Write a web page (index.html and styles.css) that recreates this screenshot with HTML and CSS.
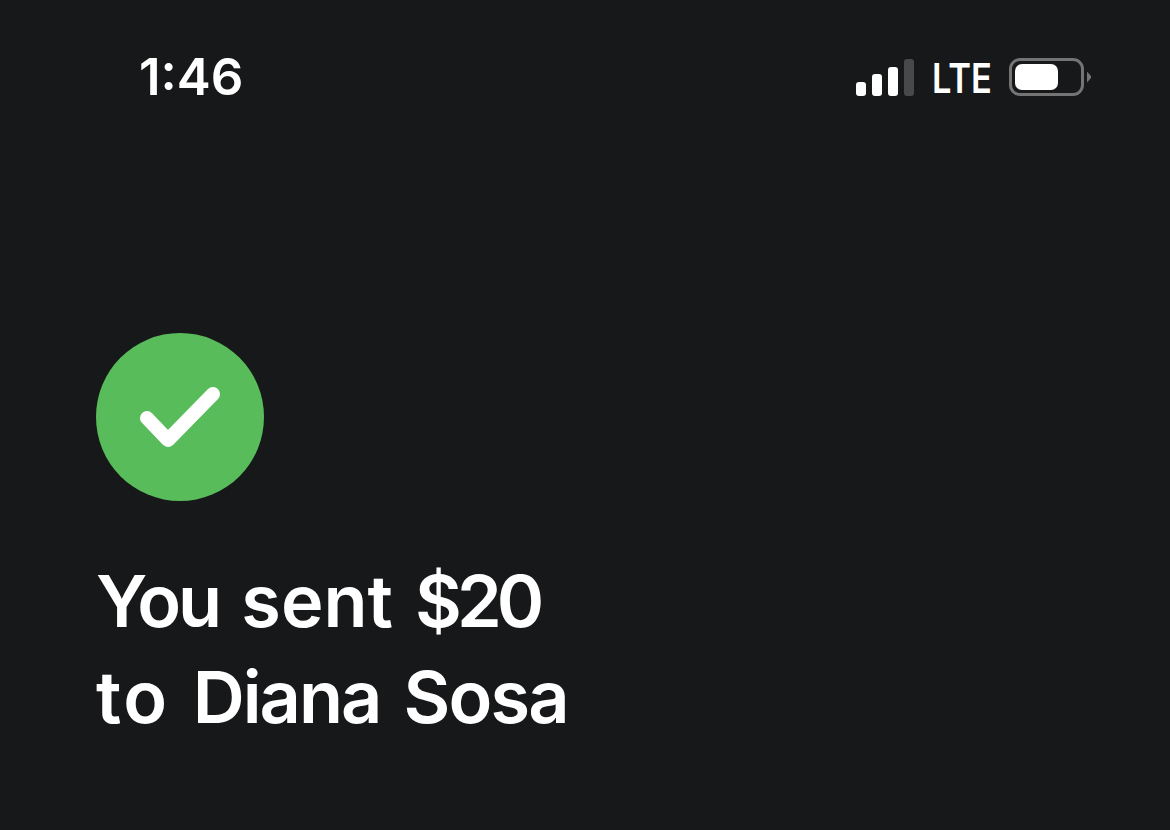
FILE: index.html
```html
<!DOCTYPE html>
<html lang="en">
<head>
<meta charset="utf-8">
<title>Payment sent</title>
<link rel="stylesheet" href="styles.css">
</head>
<body>
<main class="screen">
  <header class="status">
    <span class="time">1:46</span>
    <div class="indicators">
      <div class="signal"><i class="bar b1"></i><i class="bar b2"></i><i class="bar b3"></i><i class="bar b4"></i></div>
      <span class="lte">LTE</span>
      <div class="battery"><div class="cell"><div class="charge"></div></div><div class="nub"></div></div>
    </div>
  </header>
  <section class="content">
    <div class="badge">
      <svg class="check" width="80" height="60" viewBox="0 0 80 60"><path d="M7 31 L28 53 L73 7" fill="none" stroke="#fff" stroke-width="14" stroke-linecap="round" stroke-linejoin="round"/></svg>
    </div>
    <h1 class="title"><span class="line line-first"><span class="w-you">You</span> <span>sent</span> <span class="w-sum">$20</span></span><span class="line"><span class="w-to">to</span> <span class="w-diana">Diana</span> <span class="w-sosa">Sosa</span></span></h1>
  </section>
</main>
</body>
</html>
```
FILE: styles.css
```css
html, body { margin: 0; padding: 0; background: #17181a; }
.screen { width: 1170px; height: 830px; overflow: hidden; background: #17181a; color: #fff; font-family: "Inter", "Liberation Sans", sans-serif; box-sizing: border-box; }
.status { display: flex; justify-content: space-between; align-items: center; height: 44px; padding: 55px 79px 0 139px; }
.time { font-size: 51px; font-weight: 600; line-height: 44px; }
.indicators { display: flex; align-items: center; gap: 18px; }
.signal { display: flex; align-items: flex-end; gap: 6px; height: 37px; }
.bar { display: block; width: 10px; border-radius: 3px; background: #fff; }
.b1 { height: 14px; } .b2 { height: 22px; } .b3 { height: 29px; } .b4 { height: 37px; background: #48494b; }
.lte { display: block; width: 59px; margin-top: 2px; font-size: 41px; font-weight: 600; line-height: 44px; white-space: nowrap; transform: scaleX(.84); transform-origin: left center; }
.battery { display: flex; align-items: center; gap: 3px; }
.cell { width: 75px; height: 38px; box-sizing: border-box; border: 3px solid #747474; border-radius: 11px; padding: 3px; }
.charge { width: 43px; height: 100%; background: #fff; border-radius: 7px; }
.nub { width: 4px; height: 11px; background: #747474; clip-path: polygon(0 0, 100% 40%, 100% 60%, 0 100%); }
.content { padding: 234px 0 0 96px; }
.badge { width: 168px; height: 168px; border-radius: 50%; background: #58bc5a; display: flex; align-items: center; justify-content: center; }
.title { margin: 52px 0 0; font-size: 72px; font-weight: 600; line-height: 96px; word-spacing: 5px; }
.line { display: block; }
.line-first { word-spacing: 4px; }
.w-you { letter-spacing: -3px; }
.w-sum { letter-spacing: -5px; }
.w-to { letter-spacing: 2.5px; }
.w-diana { letter-spacing: -2px; }
.w-sosa { letter-spacing: -1.8px; }
```
